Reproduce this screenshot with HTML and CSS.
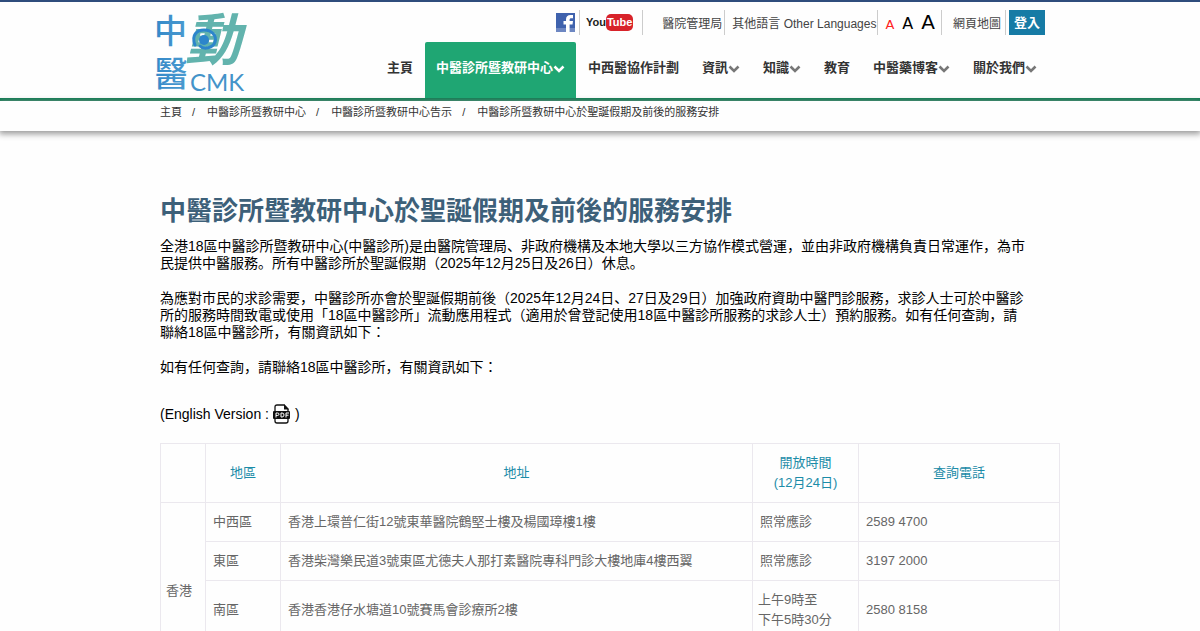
FILE: index.html
```html
<!DOCTYPE html>
<html>
<head>
<meta charset="utf-8">
<meta name="viewport" content="width=device-width, initial-scale=1">
<title>中醫診所暨教研中心於聖誕假期及前後的服務安排</title>
<link rel="stylesheet" href="styles.css">
</head>
<body>
<svg class="defs" aria-hidden="true">
  <symbol id="chevron" viewBox="0 0 12 8"><path d="M1.5 1.5 6 6 10.5 1.5" fill="none" stroke="currentColor" stroke-width="2.6"/></symbol>
</svg>
<header class="site-header">
  <div class="container header-inner">
    <a class="logo" href="#" aria-label="中醫動 CMK">
      <svg class="logo-art" viewBox="0 0 96 88">
        <defs>
          <linearGradient id="brush" gradientUnits="userSpaceOnUse" x1="0" y1="0" x2="34" y2="0">
            <stop offset="0" stop-color="#3488c8"/><stop offset="1" stop-color="#4a9bd0"/>
          </linearGradient>
        </defs>
        <text class="logo-word" x="0" y="35" font-size="33" fill="url(#brush)">中</text>
        <text class="logo-word" x="0" y="78" font-size="34" fill="url(#brush)">醫</text>
        <text class="logo-word logo-move" x="31" y="52" font-size="56" fill="#62b3ad">動</text>
        <path d="M41 37C37 27 43 22 50 22C58 22 63 28 61 34C59 40 50 42 46 38" fill="none" stroke="#2c85cb" stroke-width="3" stroke-linecap="round"/>
        <circle cx="50" cy="32" r="5" fill="#2c85cb"/>
        <text class="logo-latin" x="36" y="83" font-size="24" fill="#4393c9">CMK</text>
      </svg>
    </a>
    <div class="header-main">
      <div class="tools">
        <a class="tool tool-fb" href="#" aria-label="Facebook">
          <svg class="fb" viewBox="0 0 19 19"><rect width="19" height="19" fill="#3f62ad"/><rect y="15" width="19" height="4" fill="#6d87c2"/><path d="M10 19V11.500H7.500V8H10V6.500C10 3.500 11.500 2 14.500 2H17V5.200H15.200C14 5.200 13.600 5.700 13.600 6.800V8H17L16.500 11.500H13.600V19Z" fill="#fff"/></svg>
        </a>
        <a class="tool tool-yt" href="#"><span class="yt-you">You</span><span class="yt-tube">Tube</span></a>
        <a class="tool tool-ha" href="#">醫院管理局</a>
        <a class="tool tool-lang" href="#">其他語言 Other Languages</a>
        <div class="tool tool-size">
          <button class="size size-s" type="button">A</button>
          <button class="size size-m" type="button">A</button>
          <button class="size size-l" type="button">A</button>
        </div>
        <a class="tool tool-map" href="#">網頁地圖</a>
        <button class="login" type="button">登入</button>
      </div>
      <nav class="nav">
        <a class="nav-item" href="#">主頁</a>
        <a class="nav-item nav-active" href="#">中醫診所暨教研中心<svg class="chev"><use href="#chevron"/></svg></a>
        <a class="nav-item" href="#">中西醫協作計劃</a>
        <a class="nav-item" href="#">資訊<svg class="chev"><use href="#chevron"/></svg></a>
        <a class="nav-item" href="#">知識<svg class="chev"><use href="#chevron"/></svg></a>
        <a class="nav-item" href="#">教育</a>
        <a class="nav-item" href="#">中醫藥博客<svg class="chev"><use href="#chevron"/></svg></a>
        <a class="nav-item" href="#">關於我們<svg class="chev"><use href="#chevron"/></svg></a>
      </nav>
    </div>
  </div>
</header>
<nav class="crumb-bar">
  <div class="container crumbs">
    <a href="#">主頁</a><span>/</span><a href="#">中醫診所暨教研中心</a><span>/</span><a href="#">中醫診所暨教研中心告示</a><span>/</span><a href="#">中醫診所暨教研中心於聖誕假期及前後的服務安排</a>
  </div>
</nav>
<main class="container content">
  <h1>中醫診所暨教研中心於聖誕假期及前後的服務安排</h1>
  <p>全港18區中醫診所暨教研中心(中醫診所)是由醫院管理局、非政府機構及本地大學以三方協作模式營運，並由非政府機構負責日常運作，為市<br>民提供中醫服務。所有中醫診所於聖誕假期（2025年12月25日及26日）休息。</p>
  <p>為應對市民的求診需要，中醫診所亦會於聖誕假期前後（2025年12月24日、27日及29日）加強政府資助中醫門診服務，求診人士可於中醫診<br>所的服務時間致電或使用「18區中醫診所」流動應用程式（適用於曾登記使用18區中醫診所服務的求診人士）預約服務。如有任何查詢，請<br>聯絡18區中醫診所，有關資訊如下：</p>
  <p>如有任何查詢，請聯絡18區中醫診所，有關資訊如下：</p>
  <p class="english">(English Version :
    <a href="#" aria-label="PDF"><svg class="pdf" viewBox="0 0 18 20"><path d="M2 8V3Q2 1 4 1H11L15 5V8M2 15V17Q2 19 4 19H13Q15 19 15 17V15" fill="none" stroke="#111" stroke-width="1.300"/><path d="M11 0 16 5.500H11Z" fill="#111"/><rect x="0" y="7" width="17" height="8" rx="1" fill="#111"/><path d="M3 13.500V9H4.500Q6 9 6 10.200T4.500 11.500H3M8 9V13H9Q11 13 11 11T9 9ZM13 13.500V9H16M13 11.200H15.500" fill="none" stroke="#fff" stroke-width="1"/></svg></a>)</p>
  <table class="clinics">
    <colgroup><col class="c-region"><col class="c-district"><col class="c-address"><col class="c-hours"><col class="c-phone"></colgroup>
    <thead>
      <tr><th></th><th>地區</th><th>地址</th><th>開放時間<br>(12月24日)</th><th>查詢電話</th></tr>
    </thead>
    <tbody>
      <tr><td class="region" rowspan="4">香港</td><td>中西區</td><td>香港上環普仁街12號東華醫院鶴堅士樓及楊國璋樓1樓</td><td>照常應診</td><td>2589 4700</td></tr>
      <tr><td>東區</td><td>香港柴灣樂民道3號東區尤德夫人那打素醫院專科門診大樓地庫4樓西翼</td><td>照常應診</td><td>3197 2000</td></tr>
      <tr><td>南區</td><td>香港香港仔水塘道10號賽馬會診療所2樓</td><td class="range">上午9時至<br>下午5時30分</td><td>2580 8158</td></tr>
      <tr class="blank"><td></td><td></td><td></td><td></td></tr>
    </tbody>
  </table>
</main>
</body>
</html>
```
FILE: styles.css
```css
* { box-sizing: border-box; }

body {
  margin: 0;
  background: #fefefe;
  color: #000;
  font-family: "Liberation Sans", "Noto Sans CJK JP", sans-serif;
  font-size: 14px;
  line-height: 17px;
}

a { color: inherit; text-decoration: none; }

button {
  margin: 0;
  padding: 0;
  border: 0;
  background: none;
  font: inherit;
  cursor: pointer;
}

.defs { display: none; }

.container {
  max-width: 920px;
  margin: 0 auto;
  padding-left: 20px;
}

/* Header */
.site-header {
  border-top: 2px solid #2f4d7c;
  border-bottom: 3px solid #0c7a50;
  background: #fefefe;
}

.header-inner {
  display: flex;
  justify-content: space-between;
  padding-left: 14px;
}

.logo { padding-top: 6px; }
.logo-art { display: block; width: 96px; height: 88px; overflow: visible; }
.logo-word { font-family: "Noto Sans CJK JP", sans-serif; font-weight: 500; }
.logo-move { font-weight: 700; font-style: italic; }
.logo-latin { font-family: Lato, sans-serif; }

.header-main {
  display: flex;
  flex-direction: column;
  align-items: flex-end;
  padding-right: 12px;
}

.tools {
  display: flex;
  align-items: center;
  height: 40px;
  padding-right: 3px;
  color: #444;
  font-size: 12px;
  white-space: nowrap;
}

.tool {
  display: flex;
  align-items: center;
  height: 25px;
  border-right: 1px solid #ccc;
}

.tool-fb { padding-right: 4px; }
.fb { width: 19px; height: 19px; }

.tool-yt {
  padding: 0 9px 0 6px;
  font-size: 11px;
  font-weight: 700;
}
.yt-you { color: #222; }
.yt-tube {
  padding: 0 1px;
  border-radius: 5px;
  background: #d8232a;
  color: #fff;
}

.tool-ha { padding: 4px 2px 0 19px; }
.tool-lang { padding: 4px 1px 0 7px; }
.tool-map { padding: 4px 4px 0 11px; }

.tool-size { gap: 8px; padding: 0 6px 0 7px; align-items: baseline; }
.size { font-family: "DejaVu Sans", sans-serif; line-height: 25px; color: #000; }
.size-s { color: #f22; font-size: 13px; }
.size-m { font-size: 16px; }
.size-l { font-size: 20px; }

.login {
  width: 36px;
  height: 25px;
  margin-left: 3px;
  background: #167ba5;
  color: #fff;
  font-size: 13px;
  font-weight: 700;
}

.nav { display: flex; gap: 1px; height: 56px; }

.nav-item {
  display: flex;
  align-items: center;
  padding: 0 11px 5px;
  color: #333;
  font-size: 13px;
  font-weight: 700;
  white-space: nowrap;
}

.nav-active {
  border-radius: 2px 2px 0 0;
  background: #1fa673;
  color: #fff;
}

.chev { width: 12px; height: 8px; margin-top: 2px; color: #777; }
.nav-active .chev { color: #fff; }

/* Breadcrumb */
.crumb-bar {
  height: 30px;
  background: #fefefe;
  box-shadow: 0 2px 6px 1px #999;
}

.crumbs {
  display: flex;
  padding-top: 3px;
  color: #333;
  font-size: 11px;
  white-space: nowrap;
}
.crumbs span { padding: 0 12px 0 10px; }

/* Article */
.content { padding-top: 61px; }

h1 {
  margin: 0 0 8px;
  color: #3d6079;
  font-size: 26px;
  line-height: 38px;
}

p { margin: 0 0 18px; white-space: nowrap; }

.english { display: flex; align-items: center; gap: 4px; height: 20px; margin: 28px 0 19px; }
.pdf { display: block; width: 18px; height: 20px; }

.clinics {
  width: 100%;
  border-collapse: collapse;
  table-layout: fixed;
  color: #666;
  font-size: 13px;
  line-height: 20px;
}

.clinics th, .clinics td {
  padding: 9px 7px;
  border: 1px solid #ebe8ee;
  text-align: left;
}
.clinics th { color: #1c8ca8; font-weight: 400; text-align: center; }
.clinics .region, .clinics .range { padding: 9px 5px; }
.clinics .blank td { height: 39px; }

.c-region { width: 45px; }
.c-district { width: 75px; }
.c-hours { width: 106px; }
.c-phone { width: 201px; }
```
